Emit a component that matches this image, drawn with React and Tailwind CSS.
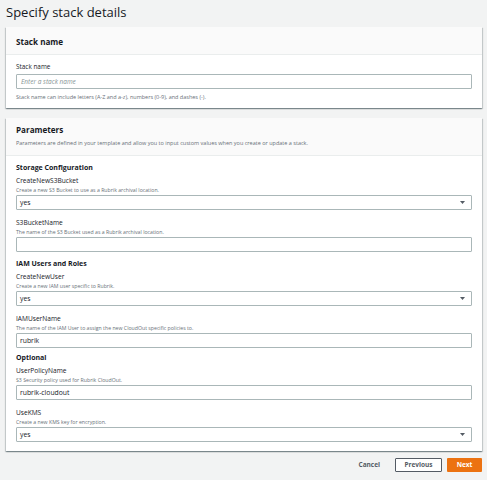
import React from "react";

const F = { fontFamily: '"Open Sans", "Liberation Sans", sans-serif' };

function Caret() {
  return (
    <svg width="5" height="3" viewBox="0 0 5 3" className="shrink-0">
      <path d="M0 0 H5 L2.5 3 Z" fill="#545b64" />
    </svg>
  );
}

function Box({ value, placeholder, select }) {
  return (
    <div className="h-[15px] border border-[#aab7b8] rounded-[1px] bg-white flex items-center justify-between pl-[3px] pr-[6px]">
      {value ? (
        <span className="text-[6.8px] leading-[8px] text-[#16191f]">{value}</span>
      ) : placeholder ? (
        <span className="text-[6.5px] leading-[8px] italic text-[#879596] pl-[1px]">{placeholder}</span>
      ) : (
        <span />
      )}
      {select && <Caret />}
    </div>
  );
}

function Field({ label, desc, value, select, first }) {
  return (
    <div className={first ? "mt-[3px]" : "mt-[8px]"}>
      <div className="text-[6.6px] leading-[10px] text-[#16191f] font-medium">{label}</div>
      <div className="text-[5.2px] leading-[8px] text-[#687078]">{desc}</div>
      <div className="mt-[1px]">
        <Box value={value} select={select} />
      </div>
    </div>
  );
}

function Section({ title, mt }) {
  return (
    <div className={`${mt} text-[7px] leading-[10px] font-bold text-[#16191f]`}>{title}</div>
  );
}

const cardShadow =
  "shadow-[0_1px_1px_0_rgba(0,28,36,0.3),1px_1px_1px_0_rgba(0,28,36,0.15),-1px_1px_1px_0_rgba(0,28,36,0.15)]";

export default function App() {
  return (
    <div style={F} className="w-[487px] h-[480px] bg-[#f2f3f3] pl-[6px] pr-[5px] overflow-hidden">
      <h1 className="text-[13px] leading-[22px] pt-[1px] text-[#16191f] font-normal">Specify stack details</h1>

      <div className={`mt-[4px] bg-white ${cardShadow}`}>
        <div className="h-[28px] bg-[#fafafa] border-b border-[#eaeded] px-[10px] pt-[3px] flex items-center">
          <span className="text-[8.1px] font-bold text-[#16191f]">Stack name</span>
        </div>
        <div className="px-[10px] pt-[7px] pb-[7px]">
          <div className="text-[6.4px] leading-[10px] text-[#16191f] font-medium">Stack name</div>
          <div className="mt-[2px]">
            <Box placeholder="Enter a stack name" />
          </div>
          <div className="mt-[4px] text-[5.5px] leading-[8px] text-[#687078]">
            Stack name can include letters (A-Z and a-z), numbers (0-9), and dashes (-).
          </div>
        </div>
      </div>

      <div className={`mt-[10px] bg-white ${cardShadow}`}>
        <div className="bg-[#fafafa] border-b border-[#eaeded] px-[10px] pt-[6px] pb-[8px]">
          <div className="text-[8.1px] leading-[12px] font-bold text-[#16191f]">Parameters</div>
          <div className="mt-[3px] text-[5.5px] leading-[8px] text-[#687078]">
            Parameters are defined in your template and allow you to input custom values when you create or update a stack.
          </div>
        </div>
        <div className="px-[10px] pt-[7px] pb-[9px]">
          <Section title="Storage Configuration" mt="" />
          <Field first label="CreateNewS3Bucket" desc="Create a new S3 Bucket to use as a Rubrik archival location." value="yes" select />
          <Field label="S3BucketName" desc="The name of the S3 Bucket used as a Rubrik archival location." />
          <Section title="IAM Users and Roles" mt="mt-[7px]" />
          <Field first label="CreateNewUser" desc="Create a new IAM user specific to Rubrik." value="yes" select />
          <Field label="IAMUserName" desc="The name of the IAM User to assign the new CloudOut specific policies to." value="rubrik" />
          <Section title="Optional" mt="mt-[5px]" />
          <Field first label="UserPolicyName" desc="S3 Security policy used for Rubrik CloudOut." value="rubrik-cloudout" />
          <Field label="UseKMS" desc="Create a new KMS key for encryption." value="yes" select />
        </div>
      </div>

      <div className="mt-[7px] flex items-center justify-end">
        <button className="text-[6.5px] font-bold text-[#545b64] mr-[15px]">Cancel</button>
        <button className="h-[14px] w-[47px] border border-[#545b64] bg-white text-[6.5px] font-bold text-[#545b64] rounded-[1px] mr-[5px]">
          Previous
        </button>
        <button className="h-[14px] w-[35px] bg-[#ec7211] text-[6.5px] font-bold text-white rounded-[1px]">
          Next
        </button>
      </div>
    </div>
  );
}
